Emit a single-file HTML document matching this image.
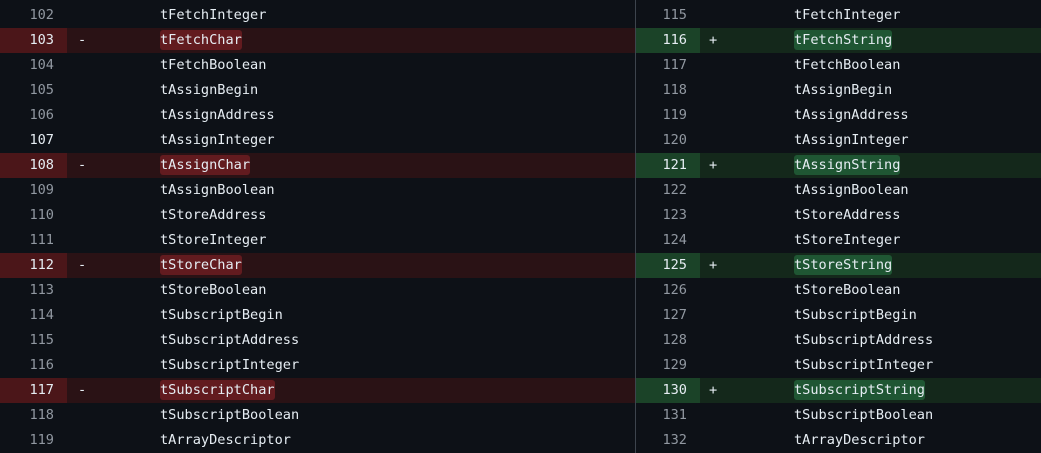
<!DOCTYPE html><html><head><style>
body{margin:0;background:#0d1117;width:1041px;height:453px;overflow:hidden;font-family:"DejaVu Sans Mono","Liberation Mono",monospace;font-size:13.6px;color:#e6edf3}
.p{position:absolute;top:3px}
.r{height:25px;position:relative;line-height:25px}
.n{position:absolute;top:0;height:25px;text-align:right;color:#9198a1}
.m{position:absolute}
.c{position:absolute;white-space:pre}
#L{left:0;width:635px}#R{left:636px;width:405px}
#L .n{left:0;width:67px}#L .n span{padding-right:13px}
#R .n{left:0;width:64px}#R .n span{padding-right:13px}
#L .m{left:78px}#R .m{left:73px}
#L .c{left:160px}#R .c{left:158px}
.d{background:#2a1215}.d .n{background:#4b1619;color:#e6edf3}
.a{background:#14281b}.a .n{background:#1b4328;color:#e6edf3}
.hd{background:#621b1f;border-radius:3px;padding:2px 0}
.ha{background:#1f5633;border-radius:3px;padding:2px 0}
.div{position:absolute;left:635px;top:0;width:1px;height:453px;background:#3d444d}
</style></head><body>
<div class="p" id="L">
<div class="r"><div class="n"><span>102</span></div><div class="c">tFetchInteger</div></div>
<div class="r d"><div class="n"><span>103</span></div><div class="m">-</div><div class="c"><span class="hd">tFetchChar</span></div></div>
<div class="r"><div class="n"><span>104</span></div><div class="c">tFetchBoolean</div></div>
<div class="r"><div class="n"><span>105</span></div><div class="c">tAssignBegin</div></div>
<div class="r"><div class="n"><span>106</span></div><div class="c">tAssignAddress</div></div>
<div class="r"><div class="n" style="color:#e6edf3"><span>107</span></div><div class="c">tAssignInteger</div></div>
<div class="r d"><div class="n"><span>108</span></div><div class="m">-</div><div class="c"><span class="hd">tAssignChar</span></div></div>
<div class="r"><div class="n"><span>109</span></div><div class="c">tAssignBoolean</div></div>
<div class="r"><div class="n"><span>110</span></div><div class="c">tStoreAddress</div></div>
<div class="r"><div class="n"><span>111</span></div><div class="c">tStoreInteger</div></div>
<div class="r d"><div class="n"><span>112</span></div><div class="m">-</div><div class="c"><span class="hd">tStoreChar</span></div></div>
<div class="r"><div class="n"><span>113</span></div><div class="c">tStoreBoolean</div></div>
<div class="r"><div class="n"><span>114</span></div><div class="c">tSubscriptBegin</div></div>
<div class="r"><div class="n"><span>115</span></div><div class="c">tSubscriptAddress</div></div>
<div class="r"><div class="n"><span>116</span></div><div class="c">tSubscriptInteger</div></div>
<div class="r d"><div class="n"><span>117</span></div><div class="m">-</div><div class="c"><span class="hd">tSubscriptChar</span></div></div>
<div class="r"><div class="n"><span>118</span></div><div class="c">tSubscriptBoolean</div></div>
<div class="r"><div class="n"><span>119</span></div><div class="c">tArrayDescriptor</div></div>
</div>
<div class="div"></div>
<div class="p" id="R">
<div class="r"><div class="n"><span>115</span></div><div class="c">tFetchInteger</div></div>
<div class="r a"><div class="n"><span>116</span></div><div class="m">+</div><div class="c"><span class="ha">tFetchString</span></div></div>
<div class="r"><div class="n"><span>117</span></div><div class="c">tFetchBoolean</div></div>
<div class="r"><div class="n"><span>118</span></div><div class="c">tAssignBegin</div></div>
<div class="r"><div class="n"><span>119</span></div><div class="c">tAssignAddress</div></div>
<div class="r"><div class="n"><span>120</span></div><div class="c">tAssignInteger</div></div>
<div class="r a"><div class="n"><span>121</span></div><div class="m">+</div><div class="c"><span class="ha">tAssignString</span></div></div>
<div class="r"><div class="n"><span>122</span></div><div class="c">tAssignBoolean</div></div>
<div class="r"><div class="n"><span>123</span></div><div class="c">tStoreAddress</div></div>
<div class="r"><div class="n"><span>124</span></div><div class="c">tStoreInteger</div></div>
<div class="r a"><div class="n"><span>125</span></div><div class="m">+</div><div class="c"><span class="ha">tStoreString</span></div></div>
<div class="r"><div class="n"><span>126</span></div><div class="c">tStoreBoolean</div></div>
<div class="r"><div class="n"><span>127</span></div><div class="c">tSubscriptBegin</div></div>
<div class="r"><div class="n"><span>128</span></div><div class="c">tSubscriptAddress</div></div>
<div class="r"><div class="n"><span>129</span></div><div class="c">tSubscriptInteger</div></div>
<div class="r a"><div class="n"><span>130</span></div><div class="m">+</div><div class="c"><span class="ha">tSubscriptString</span></div></div>
<div class="r"><div class="n"><span>131</span></div><div class="c">tSubscriptBoolean</div></div>
<div class="r"><div class="n"><span>132</span></div><div class="c">tArrayDescriptor</div></div>
</div>
</body></html>
